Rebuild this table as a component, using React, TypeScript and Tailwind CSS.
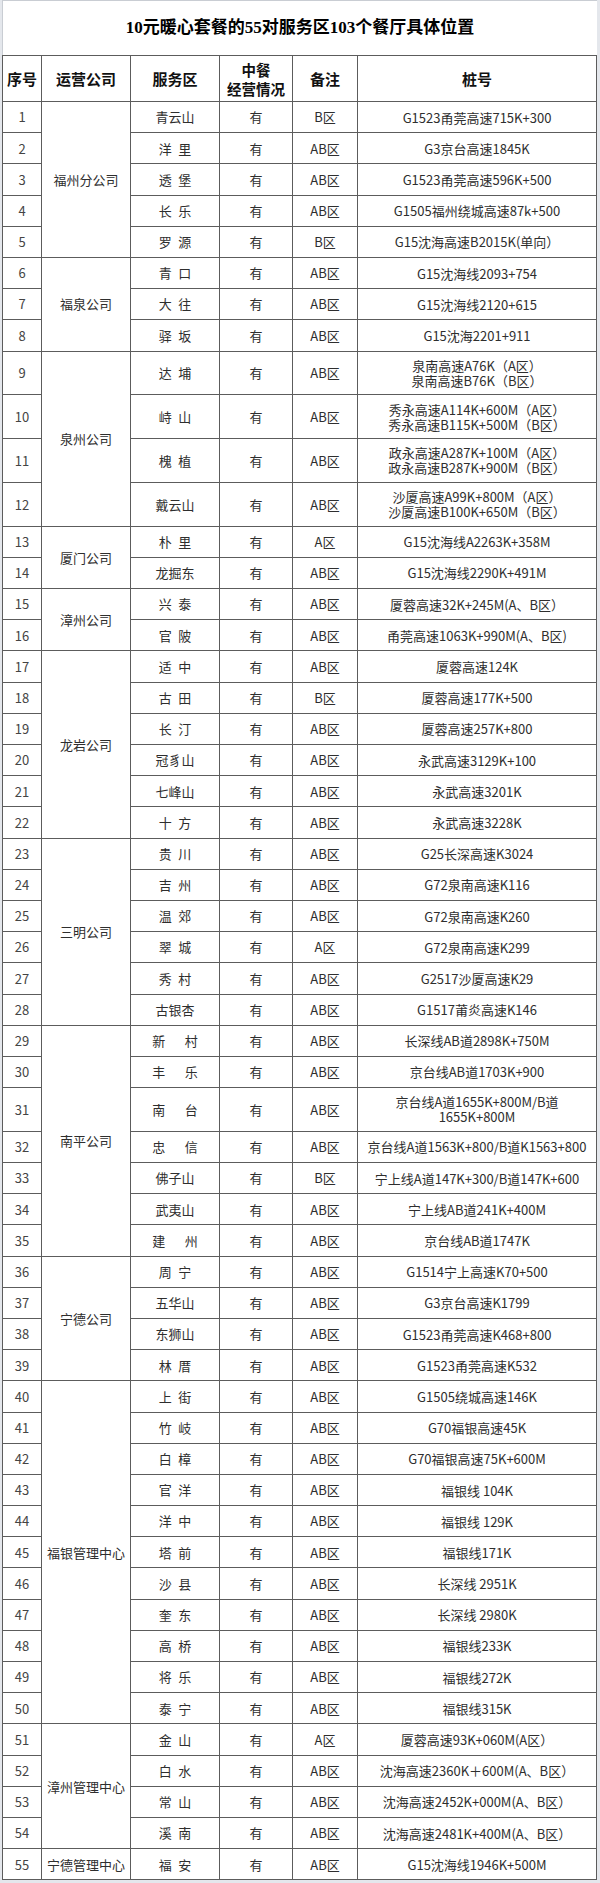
import React from "react";

type Row = [string, string, string];

interface Group {
  company: string;
  wide?: boolean;
  rows: Row[];
}

const groups: Group[] = [
  {
    company: "福州分公司",
    rows: [
      ["青云山", "B区", "G1523甬莞高速715K+300"],
      ["洋里", "AB区", "G3京台高速1845K"],
      ["透堡", "AB区", "G1523甬莞高速596K+500"],
      ["长乐", "AB区", "G1505福州绕城高速87k+500"],
      ["罗源", "B区", "G15沈海高速B2015K(单向）"],
    ],
  },
  {
    company: "福泉公司",
    rows: [
      ["青口", "AB区", "G15沈海线2093+754"],
      ["大往", "AB区", "G15沈海线2120+615"],
      ["驿坂", "AB区", "G15沈海2201+911"],
    ],
  },
  {
    company: "泉州公司",
    rows: [
      ["达埔", "AB区", "泉南高速A76K（A区）\n泉南高速B76K（B区）"],
      ["峙山", "AB区", "秀永高速A114K+600M（A区）\n秀永高速B115K+500M（B区）"],
      ["槐植", "AB区", "政永高速A287K+100M（A区）\n政永高速B287K+900M（B区）"],
      ["戴云山", "AB区", "沙厦高速A99K+800M（A区）\n沙厦高速B100K+650M（B区）"],
    ],
  },
  {
    company: "厦门公司",
    rows: [
      ["朴里", "A区", "G15沈海线A2263K+358M"],
      ["龙掘东", "AB区", "G15沈海线2290K+491M"],
    ],
  },
  {
    company: "漳州公司",
    rows: [
      ["兴泰", "AB区", "厦蓉高速32K+245M(A、B区）"],
      ["官陂", "AB区", "甬莞高速1063K+990M(A、B区)"],
    ],
  },
  {
    company: "龙岩公司",
    rows: [
      ["适中", "AB区", "厦蓉高速124K"],
      ["古田", "B区", "厦蓉高速177K+500"],
      ["长汀", "AB区", "厦蓉高速257K+800"],
      ["冠豸山", "AB区", "永武高速3129K+100"],
      ["七峰山", "AB区", "永武高速3201K"],
      ["十方", "AB区", "永武高速3228K"],
    ],
  },
  {
    company: "三明公司",
    rows: [
      ["贵川", "AB区", "G25长深高速K3024"],
      ["吉州", "AB区", "G72泉南高速K116"],
      ["温郊", "AB区", "G72泉南高速K260"],
      ["翠城", "A区", "G72泉南高速K299"],
      ["秀村", "AB区", "G2517沙厦高速K29"],
      ["古银杏", "AB区", "G1517莆炎高速K146"],
    ],
  },
  {
    company: "南平公司",
    wide: true,
    rows: [
      ["新村", "AB区", "长深线AB道2898K+750M"],
      ["丰乐", "AB区", "京台线AB道1703K+900"],
      ["南台", "AB区", "京台线A道1655K+800M/B道\n1655K+800M"],
      ["忠信", "AB区", "京台线A道1563K+800/B道K1563+800"],
      ["佛子山", "B区", "宁上线A道147K+300/B道147K+600"],
      ["武夷山", "AB区", "宁上线AB道241K+400M"],
      ["建州", "AB区", "京台线AB道1747K"],
    ],
  },
  {
    company: "宁德公司",
    rows: [
      ["周宁", "AB区", "G1514宁上高速K70+500"],
      ["五华山", "AB区", "G3京台高速K1799"],
      ["东狮山", "AB区", "G1523甬莞高速K468+800"],
      ["林厝", "AB区", "G1523甬莞高速K532"],
    ],
  },
  {
    company: "福银管理中心",
    rows: [
      ["上街", "AB区", "G1505绕城高速146K"],
      ["竹岐", "AB区", "G70福银高速45K"],
      ["白樟", "AB区", "G70福银高速75K+600M"],
      ["官洋", "AB区", "福银线 104K"],
      ["洋中", "AB区", "福银线 129K"],
      ["塔前", "AB区", "福银线171K"],
      ["沙县", "AB区", "长深线 2951K"],
      ["奎东", "AB区", "长深线 2980K"],
      ["高桥", "AB区", "福银线233K"],
      ["将乐", "AB区", "福银线272K"],
      ["泰宁", "AB区", "福银线315K"],
    ],
  },
  {
    company: "漳州管理中心",
    rows: [
      ["金山", "A区", "厦蓉高速93K+060M(A区）"],
      ["白水", "AB区", "沈海高速2360K＋600M(A、B区）"],
      ["常山", "AB区", "沈海高速2452K+000M(A、B区）"],
      ["溪南", "AB区", "沈海高速2481K+400M(A、B区）"],
    ],
  },
  {
    company: "宁德管理中心",
    rows: [["福安", "AB区", "G15沈海线1946K+500M"]],
  },
];

const cell = "border border-[#5c5c5c] p-0 text-center align-middle";

function spaced(name: string, wide?: boolean) {
  if (name.length !== 2) return name;
  return wide ? `${name[0]}\u3000\u2002${name[1]}` : `${name[0]}\u2002${name[1]}`;
}

export default function App() {
  let no = 0;

  return (
    <div
      className="h-[1883px] w-[600px] bg-[#e4e7ec] pl-[2px] pr-[3px] text-[#2e2e2e]"
      style={{ fontFamily: '"Noto Sans CJK SC", "Noto Sans", sans-serif' }}
    >
      <div className="bg-white">
        <div
          className="flex h-[55px] items-center justify-center border-t border-l border-[#c9cdd3] text-[17px] font-bold text-black"
          style={{ fontFamily: '"Liberation Serif", "Noto Sans CJK SC", serif' }}
        >
          10元暖心套餐的55对服务区103个餐厅具体位置
        </div>
        <table className="w-full table-fixed border-collapse text-[13px]">
          <colgroup>
            <col className="w-[39px]" />
            <col className="w-[89px]" />
            <col className="w-[89px]" />
            <col className="w-[73px]" />
            <col className="w-[65px]" />
            <col />
          </colgroup>
          <thead>
            <tr className="h-[46px] text-[15px] font-bold leading-[20px] text-[#111]">
              <th className={cell}>序号</th>
              <th className={cell}>运营公司</th>
              <th className={`${cell} leading-[19px]`}>服务区</th>
              <th className={`${cell} text-[14.5px] leading-[19px]`}>
                中餐
                <br />
                经营情况
              </th>
              <th className={cell}>备注</th>
              <th className={cell}>桩号</th>
            </tr>
          </thead>
          <tbody>
            {groups.flatMap((g) =>
              g.rows.map(([name, zone, pile], i) => {
                no += 1;
                const tall = pile.includes("\n");
                return (
                  <tr key={no} className={tall ? "h-[43.8px]" : "h-[31.2px]"}>
                    <td className={`${cell} text-[#444]`}>{no}</td>
                    {i === 0 && (
                      <td className={`${cell} whitespace-nowrap`} rowSpan={g.rows.length}>
                        {g.company}
                      </td>
                    )}
                    <td className={cell}>{spaced(name, g.wide)}</td>
                    <td className={cell}>有</td>
                    <td className={cell}>{zone}</td>
                    <td className={`${cell} whitespace-pre-line leading-[15px]`}>{pile}</td>
                  </tr>
                );
              })
            )}
          </tbody>
        </table>
      </div>
    </div>
  );
}
